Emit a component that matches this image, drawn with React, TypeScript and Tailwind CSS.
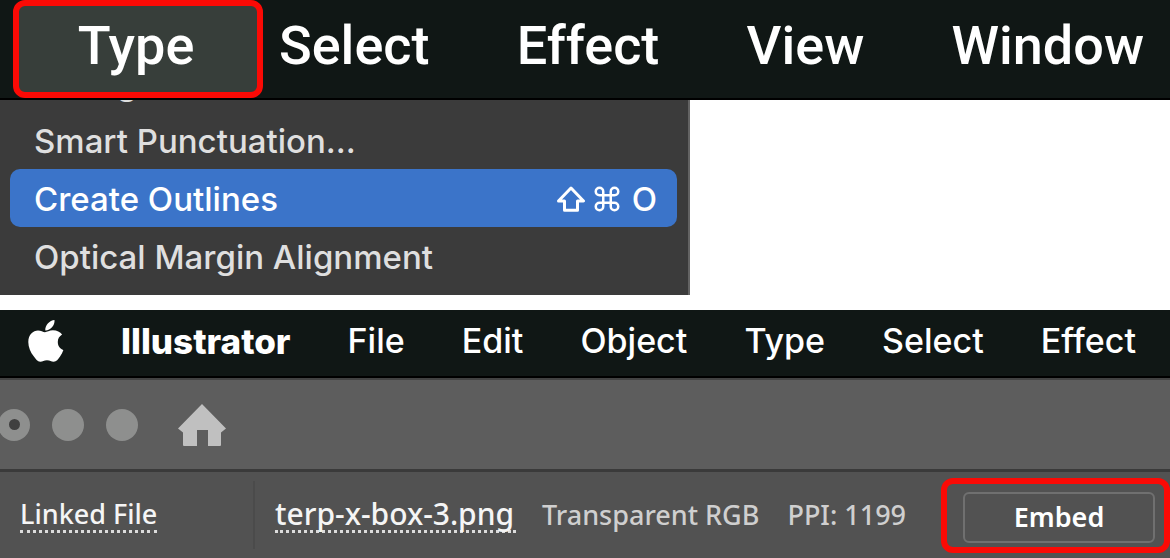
import { Command } from "lucide-react";

const zoomedMenus = ["Select", "Effect", "View", "Window"];
const appMenus = ["File", "Edit", "Object", "Type", "Select", "Effect"];

const AppleLogo = () => (
  <svg viewBox="0 0 36 42" className="w-9 h-[42px]" fill="currentColor" aria-label="Apple">
    <path d="M26.5 0c.3 2.7-.8 5.300-2.500 7.300-1.700 2-4.200 3.300-6.700 3.200-.3-2.600.9-5.300 2.500-7C21.500 1.600 24.300.2 26.500 0z" />
    <path d="M34.100 14.500c-2.700 1.700-4.300 4.100-4.300 7.400 0 3.800 2.200 6.800 5.600 8.100-.8 2.400-2 4.600-3.500 6.800-1.700 2.500-3.500 4.900-6.200 4.900-2.700 0-3.500-1.500-6.700-1.500-3.100 0-4.100 1.500-6.700 1.500-2.700.1-4.700-2.600-6.400-5.100C2.400 32.200.3 27 .3 22 .3 14.500 5.200 10.500 10 10.500c2.800 0 5.200 1.700 7 1.700 1.700 0 4.500-1.900 7.900-1.900 4.100 0 7.300 1.600 9.200 4.200z" />
  </svg>
);

const HomeIcon = () => (
  <svg viewBox="0 0 48 42" className="w-12 h-[42px]" fill="#c0c0c0">
    <path d="M24 0 48 24.500 43 28.500V41q0 1-1 1H30V26H19V42H6q-1 0-1-1V28.500L0 24.500Z" />
  </svg>
);

const ShiftIcon = () => (
  <svg viewBox="0 0 30 26" className="w-[30px] h-[26px]" fill="none" stroke="currentColor" strokeWidth="3" strokeLinejoin="round">
    <path d="M15 2 27.500 15H21.500V24.300H8.500V15H2.500Z" />
  </svg>
);

const ZoomedMenuBar = () => (
  <nav className="flex items-start h-[100px] pl-[13px] bg-[#101715] border-b-2 border-black text-white text-[54px] leading-none font-medium font-[Roboto,sans-serif]">
    <button className="w-[250px] h-[98px] shrink-0 pb-1.5 pr-1 rounded-xl border-6 border-[#fb0a05] bg-[#373e3a]">
      Type
    </button>
    <div className="flex flex-1 items-center justify-between h-[98px] pl-4 pr-[26px] pb-1.5">
      {zoomedMenus.map((item) => (
        <button key={item}>{item}</button>
      ))}
    </div>
  </nav>
);

const TypeMenu = () => (
  <div className="w-[690px] max-w-full pl-[10px] pr-[11px] pb-[10px] bg-[#3b3b3b] border-r-2 border-[#636363] text-[#dfdfdf] text-[33px] leading-[56px] font-medium font-[Inter,sans-serif]">
    {/* scrolled mostly out of view */}
    <div className="flex flex-col justify-end h-[11px] overflow-hidden">
      <button className="shrink-0 h-[58px] pt-0.5 px-6 text-left">Change Case</button>
    </div>
    <button className="block w-full h-[58px] pt-0.5 px-6 text-left">Smart Punctuation...</button>
    <button className="flex items-center justify-between w-full h-[58px] pt-0.5 pl-6 pr-5 rounded-[10px] bg-[#3b74c9] text-white">
      <span>Create Outlines</span>
      <span className="flex items-center gap-1.5">
        <ShiftIcon />
        <Command className="size-[30px]" strokeWidth={2} />
        <span className="pl-1">O</span>
      </span>
    </button>
    <button className="block w-full h-[58px] pt-0.5 px-6 text-left">Optical Margin Alignment</button>
  </div>
);

const AppMenuBar = () => (
  <nav className="flex items-center justify-between h-[68px] pl-7 pr-[34px] pb-1 bg-[#101715] border-b-2 border-black text-white text-[34px] leading-none font-medium font-[Inter,sans-serif]">
    <AppleLogo />
    <button className="text-[35px] font-extrabold">Illustrator</button>
    {appMenus.map((item) => (
      <button key={item}>{item}</button>
    ))}
  </nav>
);

const WindowBar = () => (
  <div className="flex items-center h-[94px] bg-[#5d5d5d] border-t-2 border-t-[#424242] border-b-3 border-b-[#3a3a3a]">
    <div className="flex gap-[22px] -ml-0.5">
      <div className="flex items-center justify-center size-8 rounded-full bg-[#8e8f8e]">
        <div className="size-[11px] rounded-full bg-[#404040]" />
      </div>
      <div className="size-8 rounded-full bg-[#8e8f8e]" />
      <div className="size-8 rounded-full bg-[#8e8f8e]" />
    </div>
    <button className="ml-10" aria-label="Home">
      <HomeIcon />
    </button>
  </div>
);

const ControlBar = () => (
  <div className="flex items-center flex-1 pl-5 bg-[#525252] text-[#cfcfcf] text-[27px] leading-8 font-medium font-['Noto_Sans',sans-serif]">
    <div className="w-[233px]">
      <a href="#" className="inline-block border-b-3 border-dotted border-[#dcdcdc] text-[#f5f5f5]">Linked File</a>
    </div>
    <div className="w-0.5 h-[68px] bg-[#4b4b4b]" />
    <div className="w-[241px] ml-5 shrink-0">
      <a href="#" className="block border-b-3 border-dotted border-[#dcdcdc] text-[#f5f5f5] text-[30px] leading-8">terp-x-box-3.png</a>
    </div>
    <span className="ml-[26px] whitespace-nowrap">Transparent RGB</span>
    <span className="ml-7 whitespace-nowrap">PPI: 1199</span>
    <div className="w-[229px] h-[75px] ml-auto shrink-0 pt-2 pl-4 pr-[9px] border-6 border-[#fb0a05] rounded-xl">
      <button className="w-full h-[51px] rounded-md border-2 border-[#707070] text-white font-semibold">Embed</button>
    </div>
  </div>
);

export default function App() {
  return (
    <main className="flex flex-col min-h-screen bg-white">
      <ZoomedMenuBar />
      <TypeMenu />
      <section className="flex flex-col flex-1 mt-[15px]">
        <AppMenuBar />
        <WindowBar />
        <ControlBar />
      </section>
    </main>
  );
}
